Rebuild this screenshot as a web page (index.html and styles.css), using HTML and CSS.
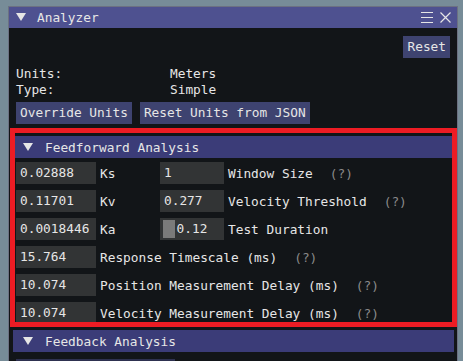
FILE: index.html
```html
<html>
<head>
    <title>Analyzer</title>
    <link rel="stylesheet" href="styles.css">
</head>
<body>

    <div class="window">
        <div class="titlebar">
            <span class="arrow"></span>
            <span class="title">Analyzer</span>
            <span class="title-icons">
                <svg width="12" height="11" viewBox="0 0 12 11"><path d="M0 0.5H12M0 5.5H12M0 10.5H12" stroke="#e6e6e6" stroke-width="1"/></svg>
                <svg width="11" height="11" viewBox="0 0 11 11"><path d="M0.5 0.5L10.5 10.5M10.5 0.5L0.5 10.5" stroke="#e6e6e6" stroke-width="1.2"/></svg>
            </span>
        </div>
        <div class="content">
            <div class="top-row"><button class="btn">Reset</button></div>
            <div class="kv"><span class="kv-key">Units:</span><span>Meters</span></div>
            <div class="kv"><span class="kv-key">Type:</span><span>Simple</span></div>
            <div class="btn-row">
                <button class="btn">Override Units</button>
                <button class="btn">Reset Units from JSON</button>
            </div>

            <div class="header header-first"><span class="arrow"></span>Feedforward Analysis</div>
            <div class="rows">
                <div class="row">
                    <div class="field">0.02888</div><span class="lbl">Ks</span>
                    <div class="field small">1</div><span class="lbl2">Window Size</span><span class="help">(?)</span>
                </div>
                <div class="row">
                    <div class="field">0.11701</div><span class="lbl">Kv</span>
                    <div class="field small">0.277</div><span class="lbl2">Velocity Threshold</span><span class="help">(?)</span>
                </div>
                <div class="row">
                    <div class="field">0.0018446</div><span class="lbl">Ka</span>
                    <div class="field small slider"><span class="grab"></span>0.12</div><span class="lbl2">Test Duration</span>
                </div>
                <div class="row">
                    <div class="field">15.764</div><span class="lbl2">Response Timescale (ms)</span><span class="help">(?)</span>
                </div>
                <div class="row">
                    <div class="field">10.074</div><span class="lbl2">Position Measurement Delay (ms)</span><span class="help">(?)</span>
                </div>
                <div class="row">
                    <div class="field">10.074</div><span class="lbl2">Velocity Measurement Delay (ms)</span><span class="help">(?)</span>
                </div>
            </div>

            <div class="header header-second"><span class="arrow"></span>Feedback Analysis</div>
            <div class="partial"></div>
        </div>
    </div>

    <div class="highlight"></div>

</body>
</html>
```

FILE: styles.css
```css
body { margin: 0; padding: 6px 0 0 8px; background-color: #778c98; font-family: "DejaVu Sans Mono", monospace; font-size: 12.8px; color: #e6e6e6; overflow: hidden; height: 361px; box-sizing: border-box; }
.window { width: 448px; height: 354px; overflow: hidden; border: 1px solid #6c7182; border-bottom: none; background-color: #121518; }
.titlebar { height: 22px; margin-top: -1px; background-color: #4e5190; display: flex; align-items: center; padding-left: 7px; }
.titlebar .arrow { margin-right: 11px; }
.title { flex: 1; }
.title-icons { display: flex; align-items: center; gap: 7px; margin-right: 6px; }
.title-icons svg { display: block; }
.arrow { display: inline-block; width: 0; height: 0; border-left: 5px solid transparent; border-right: 5px solid transparent; border-top: 8px solid #e6e6e6; }

.content { padding: 8px 7px 0 7px; }
.top-row { display: flex; justify-content: flex-end; }
.btn { height: 22px; padding: 0 4px; border: none; background-color: #3e4370; color: #e6e6e6; font-family: inherit; font-size: inherit; line-height: 22px; }
.kv { height: 16px; line-height: 16px; display: flex; }
.top-row + .kv { margin-top: 8px; }
.kv-key { width: 154px; }
.btn-row { display: flex; gap: 8px; margin-top: 4px; }

.header { height: 22px; margin: 0 -4px 0 -3px; background-color: #3b3c78; display: flex; align-items: center; padding-left: 10px; }
.header .arrow { margin-right: 12px; }
.header-first { margin-top: 12px; }
.header-second { margin-top: 6px; }

.rows { display: flex; flex-direction: column; gap: 6px; margin-top: 4px; }
.row { height: 22px; display: flex; align-items: center; }
.field { width: 80px; height: 22px; line-height: 22px; padding: 0 4px; box-sizing: border-box; background-color: #323435; white-space: nowrap; }
.field.small { width: 64px; }
.slider { position: relative; text-align: center; }
.grab { position: absolute; left: 3px; top: 2px; width: 12px; height: 18px; background-color: #7a7a7a; }
.lbl { width: 60px; margin-left: 4px; }
.lbl2 { margin-left: 4px; }
.help { margin-left: 17px; color: #8a8a8a; }

.partial { width: 159px; height: 20px; margin-top: 7px; background-color: #2e3150; }

.highlight { position: absolute; left: 10px; top: 128px; width: 447px; height: 199px; box-sizing: border-box; border: 5px solid #ed1c24; }
```
